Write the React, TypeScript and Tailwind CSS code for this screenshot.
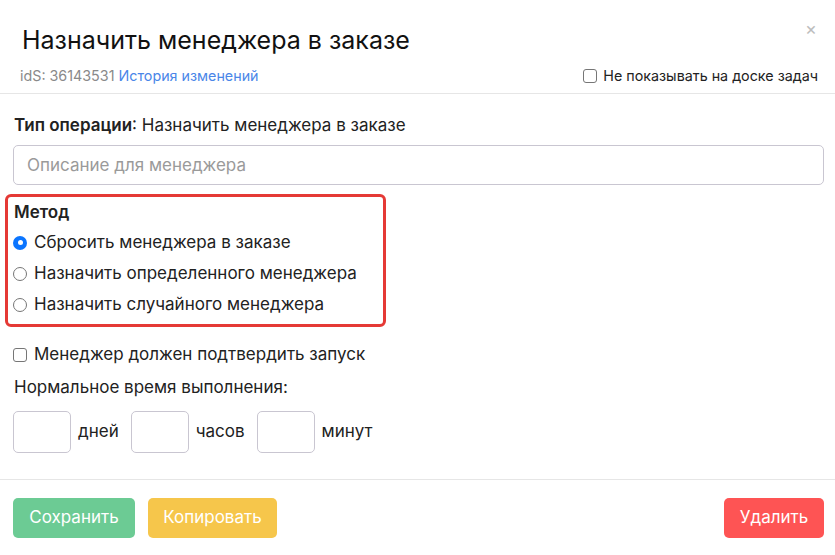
import React, { useState } from 'react';

const font = { fontFamily: 'Inter, "Noto Sans", sans-serif' };

function Radio({ checked, label, onClick }: { checked: boolean; label: string; onClick: () => void }) {
  return (
    <label className="flex items-center gap-[7px] h-[31px] cursor-pointer" onClick={onClick}>
      {checked ? (
        <span className="w-[14px] h-[14px] rounded-full bg-[#0b75ff] flex items-center justify-center">
          <span className="w-[5px] h-[5px] rounded-full bg-white" />
        </span>
      ) : (
        <span className="w-[14px] h-[14px] rounded-full border border-[#767676] bg-white" />
      )}
      <span className="text-[17px] text-[#222]">{label}</span>
    </label>
  );
}

function TimeBox({ unit }: { unit: string }) {
  return (
    <div className="flex items-center gap-[7px]">
      <input className="w-[58px] h-[42px] rounded-[5px] border border-[#c9c6d1] bg-white outline-none" />
      <span className="text-[17px] text-[#222]">{unit}</span>
    </div>
  );
}

export default function App() {
  const [method, setMethod] = useState(0);
  const methods = [
    'Сбросить менеджера в заказе',
    'Назначить определенного менеджера',
    'Назначить случайного менеджера',
  ];

  return (
    <div className="w-[835px] h-[555px] bg-white overflow-hidden" style={font}>
      {/* header */}
      <div className="relative h-[94px] border-b border-[#e6e6e6] px-[20px]">
        <div className="pt-[22px] pl-[2px] text-[25px] leading-[36px] text-[#111]">Назначить менеджера в заказе</div>
        <div className="flex items-center justify-between mt-[7px]">
          <div className="text-[14.3px] text-[#8a8a8a]">
            idS: 36143531 <span className="text-[#4a86e8]">История изменений</span>
          </div>
          <label className="flex items-center gap-[6px] text-[14.3px] text-[#222] -mr-[3px]">
            <span className="w-[14px] h-[14px] rounded-[3px] border border-[#767676] bg-white" />
            Не показывать на доске задач
          </label>
        </div>
        <span className="absolute right-[18px] top-[20px] text-[18px] text-[#bdbdbd] leading-none">×</span>
      </div>

      {/* body */}
      <div className="h-[386px] border-b border-[#e6e6e6] px-[13px] pt-[20px]">
        <div className="text-[17px] text-[#222] leading-[22px] pl-[1px]">
          <span className="font-semibold">Тип операции</span>: Назначить менеджера в заказе
        </div>
        <input
          placeholder="Описание для менеджера"
          className="mt-[9px] w-[811px] h-[40px] rounded-[5px] border border-[#c9c6d1] px-[13px] text-[17px] placeholder:text-[#9a9a9a] outline-none"
        />
        <div className="-ml-[8px] mt-[9px] w-[381px] h-[133px] rounded-[6px] border-[3px] border-[#e53935] pl-[5px] pt-[4px]">
          <div className="text-[17px] font-semibold text-[#222] leading-[22px] pl-[1px]">Метод</div>
          <div className="mt-[4px]">
            {methods.map((m, i) => (
              <Radio key={m} label={m} checked={method === i} onClick={() => setMethod(i)} />
            ))}
          </div>
        </div>
        <label className="flex items-center gap-[7px] mt-[12px] h-[31px]">
          <span className="w-[14px] h-[14px] rounded-[3px] border border-[#767676] bg-white" />
          <span className="text-[17px] text-[#222]">Менеджер должен подтвердить запуск</span>
        </label>
        <div className="text-[17px] text-[#222] mt-[6px] leading-[22px] pl-[1px]">Нормальное время выполнения:</div>
        <div className="flex items-center gap-[12px] mt-[13px]">
          <TimeBox unit="дней" />
          <TimeBox unit="часов" />
          <TimeBox unit="минут" />
        </div>
      </div>

      {/* footer */}
      <div className="flex items-center pl-[13px] pr-[11px] pt-[18px]">
        <button className="w-[122px] h-[40px] rounded-[5px] bg-[#6ccb94] text-white text-[17px]">Сохранить</button>
        <button className="ml-[13px] w-[129px] h-[40px] rounded-[5px] bg-[#f6c64b] text-white text-[17px]">Копировать</button>
        <button className="ml-auto w-[100px] h-[40px] rounded-[5px] bg-[#fe5454] text-white text-[17px]">Удалить</button>
      </div>
    </div>
  );
}
